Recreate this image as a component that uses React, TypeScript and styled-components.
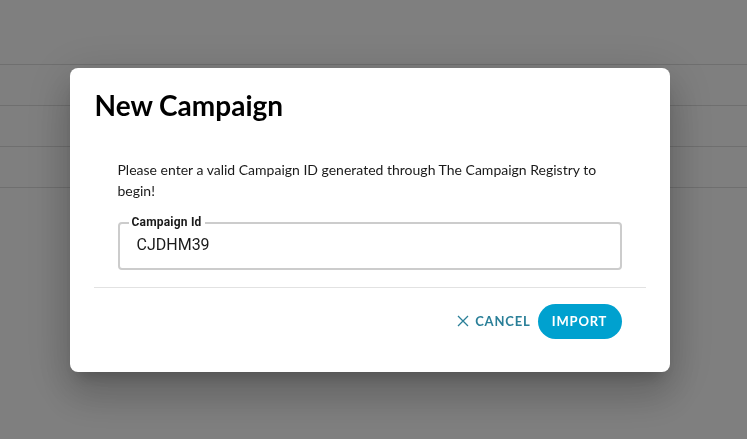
import styled, { createGlobalStyle } from "styled-components";

const GlobalStyle = createGlobalStyle`
  html, body {
    margin: 0;
    padding: 0;
    height: 100%;
  }
  body {
    background: #ffffff;
    font-family: Lato, "Noto Sans", sans-serif;
    overflow: hidden;
  }
`;

const Page = styled.div`
  width: 100vw;
  height: 100vh;
  display: flex;
  flex-direction: column;
  background: #ffffff;
`;

const PageHeader = styled.div`
  height: 65px;
  border-bottom: 1px solid #dedede;
  box-sizing: border-box;
`;

const PageRow = styled.div`
  height: 41px;
  border-bottom: 1px solid #dedede;
  box-sizing: border-box;
`;

const Overlay = styled.div`
  position: fixed;
  inset: 0;
  background: rgba(0, 0, 0, 0.5);
  display: flex;
  align-items: center;
  justify-content: center;
`;

const Dialog = styled.div`
  width: 600px;
  height: 304px;
  margin-right: 8px;
  box-sizing: border-box;
  background: #ffffff;
  border-radius: 8px;
  box-shadow: 0 11px 15px -7px rgba(0, 0, 0, 0.2), 0 24px 38px 3px rgba(0, 0, 0, 0.14),
    0 9px 46px 8px rgba(0, 0, 0, 0.12);
  padding: 0 24px;
  display: flex;
  flex-direction: column;
`;

const Title = styled.h2`
  margin: 0;
  padding: 20px 0 0 1px;
  font-family: Lato, "Noto Sans", sans-serif;
  font-size: 28px;
  font-weight: 700;
  line-height: 34px;
  color: #000000;
`;

const Body = styled.div`
  padding: 37px 24px 0;
  display: flex;
  flex-direction: column;
  gap: 21px;
`;

const Message = styled.p`
  margin: 0;
  font-size: 14px;
  line-height: 21px;
  color: #1a1a1a;
`;

const Field = styled.div`
  height: 48px;
  box-sizing: border-box;
  border: 2px solid #cccccc;
  border-radius: 4px;
  padding: 0 17px;
  display: flex;
  align-items: center;
  position: relative;
`;

const Label = styled.label`
  position: absolute;
  top: -8px;
  left: 9px;
  padding: 0 3px;
  background: #ffffff;
  font-family: Roboto, "Liberation Sans", sans-serif;
  font-size: 12px;
  font-weight: 700;
  line-height: 12px;
  color: #1a1a1a;
  letter-spacing: 0.2px;
`;

const Input = styled.input`
  border: none;
  outline: none;
  padding: 0;
  margin-top: -2px;
  width: 100%;
  font-family: Roboto, "Liberation Sans", sans-serif;
  font-size: 16px;
  color: #1a1a1a;
  background: transparent;
`;

const Divider = styled.hr`
  margin: 17px 0 0;
  border: none;
  border-top: 1px solid #e2e2e2;
`;

const Actions = styled.div`
  display: flex;
  justify-content: flex-end;
  align-items: center;
  gap: 7px;
  padding: 16px 24px 0;
`;

const TextButton = styled.button`
  display: flex;
  align-items: center;
  gap: 6px;
  border: none;
  background: transparent;
  padding: 0;
  font-family: Lato, "Noto Sans", sans-serif;
  font-size: 13px;
  font-weight: 700;
  letter-spacing: 0.8px;
  color: #2a7f98;
  cursor: pointer;
`;

const PillButton = styled.button`
  height: 35px;
  width: 84px;
  border: none;
  border-radius: 18px;
  background: #00a1cf;
  color: #ffffff;
  font-family: Lato, "Noto Sans", sans-serif;
  font-size: 13px;
  font-weight: 700;
  letter-spacing: 0.8px;
  cursor: pointer;
`;

export default function App() {
  return (
    <>
      <GlobalStyle />
      <Page>
        <PageHeader />
        <PageRow />
        <PageRow />
        <PageRow />
      </Page>
      <Overlay>
        <Dialog>
          <Title>New Campaign</Title>
          <Body>
            <Message>
              Please enter a valid Campaign ID generated through The Campaign Registry to begin!
            </Message>
            <Field>
              <Label htmlFor="campaign-id">Campaign Id</Label>
              <Input id="campaign-id" defaultValue="CJDHM39" />
            </Field>
          </Body>
          <Divider />
          <Actions>
            <TextButton type="button">
              <svg width="12" height="12" viewBox="0 0 12 12" fill="none">
                <path d="M1 1L11 11M11 1L1 11" stroke="#2a7f98" strokeWidth="1.3" />
              </svg>
              CANCEL
            </TextButton>
            <PillButton type="button">IMPORT</PillButton>
          </Actions>
        </Dialog>
      </Overlay>
    </>
  );
}
